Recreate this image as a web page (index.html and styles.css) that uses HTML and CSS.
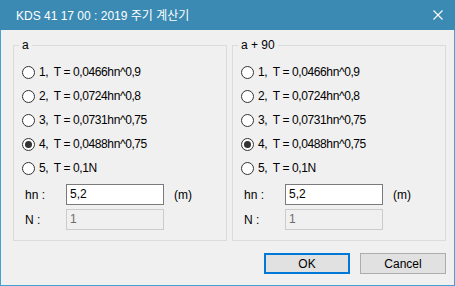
FILE: index.html
```html
<!DOCTYPE html>
<html lang="ko">
<head>
    <meta charset="UTF-8">
    <title>KDS 41 17 00 : 2019 주기 계산기</title>
    <link rel="stylesheet" href="styles.css">
</head>
<body>
    <div class="window">
        <div class="titlebar">
            <span class="title">KDS 41 17 00 : 2019 주기 계산기</span>
            <svg class="close" width="10" height="10" viewBox="0 0 10 10">
                <path d="M0.5 0.5 L9.5 9.5 M9.5 0.5 L0.5 9.5" stroke="#fff" stroke-width="1.1" fill="none"/>
            </svg>
        </div>
        <div class="content">
            <div class="groups">
                <fieldset class="group">
                    <legend>a</legend>
                    <div class="option"><span class="radio"></span>1,  T = 0,0466hn^0,9</div>
                    <div class="option"><span class="radio"></span>2,  T = 0,0724hn^0,8</div>
                    <div class="option"><span class="radio"></span>3,  T = 0,0731hn^0,75</div>
                    <div class="option"><span class="radio checked"></span>4,  T = 0,0488hn^0,75</div>
                    <div class="option"><span class="radio"></span>5,  T = 0,1N</div>
                    <div class="field"><span class="label">hn :</span><input class="box" value="5,2"><span class="unit">(m)</span></div>
                    <div class="field"><span class="label">N :</span><input class="box" value="1" disabled></div>
                </fieldset>
                <fieldset class="group">
                    <legend>a + 90</legend>
                    <div class="option"><span class="radio"></span>1,  T = 0,0466hn^0,9</div>
                    <div class="option"><span class="radio"></span>2,  T = 0,0724hn^0,8</div>
                    <div class="option"><span class="radio"></span>3,  T = 0,0731hn^0,75</div>
                    <div class="option"><span class="radio checked"></span>4,  T = 0,0488hn^0,75</div>
                    <div class="option"><span class="radio"></span>5,  T = 0,1N</div>
                    <div class="field"><span class="label">hn :</span><input class="box" value="5,2"><span class="unit">(m)</span></div>
                    <div class="field"><span class="label">N :</span><input class="box" value="1" disabled></div>
                </fieldset>
            </div>
            <div class="buttons">
                <button class="btn default">OK</button>
                <button class="btn">Cancel</button>
            </div>
        </div>
    </div>
</body>
</html>
```

FILE: styles.css
```css
body {
    margin: 0;
    font-family: "Liberation Sans", "Noto Sans CJK KR", sans-serif;
    font-size: 12px;
    color: #000;
}
.window {
    width: 455px;
    height: 286px;
    display: flex;
    flex-direction: column;
}
.titlebar {
    height: 30px;
    background-color: #3a8ab3;
    display: flex;
    align-items: center;
    justify-content: space-between;
    padding: 0 12px 0 16px;
    color: white;
    flex-shrink: 0;
}
.title {
    font-size: 12px;
    margin-top: -2px;
}
.content {
    flex: 1;
    background-color: #f0f0f0;
    border: 1px solid #45a1d3;
    border-top: none;
    padding: 8px 8px 0 12px;
}
.groups {
    display: flex;
    gap: 5px;
}
.group {
    width: 214px;
    height: 203px;
    box-sizing: border-box;
    margin: 0;
    padding: 8px 5px 0 5px;
    border: 1px solid #dcdcdc;
}
.group legend {
    padding: 0 3px;
    line-height: 14px;
}
.option {
    height: 24px;
    display: flex;
    align-items: center;
    padding-left: 3px;
    white-space: pre;
    letter-spacing: -0.4px;
}
.radio {
    width: 11px;
    height: 11px;
    border: 1px solid #333;
    border-radius: 50%;
    background-color: white;
    margin-right: 4px;
    display: flex;
    align-items: center;
    justify-content: center;
}
.radio.checked::after {
    content: "";
    width: 7px;
    height: 7px;
    border-radius: 50%;
    background-color: #333;
}
.field {
    display: flex;
    align-items: center;
    padding-left: 6px;
    margin-top: 4px;
}
.label {
    width: 41px;
}
.box {
    width: 98px;
    height: 21px;
    box-sizing: border-box;
    border: 1px solid #7a7a7a;
    background: white;
    padding: 0 3px 2px;
    margin: 0;
    font: inherit;
    color: #000;
    outline: none;
}
.box:disabled {
    border-color: #cccccc;
    background: #f0f0f0;
    color: #6d6d6d;
}
.unit {
    margin-left: 10px;
}
.buttons {
    display: flex;
    justify-content: flex-end;
    gap: 10px;
    margin-top: 12px;
}
.btn {
    width: 86px;
    height: 21px;
    box-sizing: border-box;
    border: 1px solid #adadad;
    background-color: #e1e1e1;
    font: inherit;
    color: #000;
    padding: 0;
}
.btn.default {
    border: 2px solid #0078d7;
}
```
